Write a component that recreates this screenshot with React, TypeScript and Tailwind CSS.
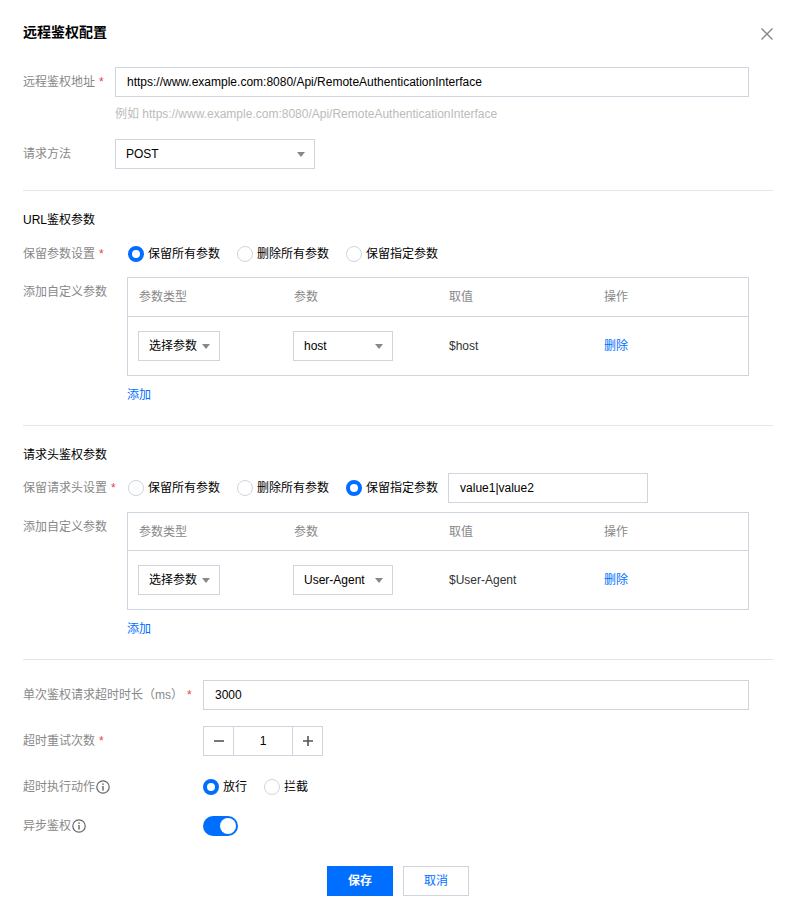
import React, { useState } from "react";

const FONT = "[font-family:'Liberation_Sans','Noto_Sans_CJK_SC',sans-serif]";

function Star() {
  return <span className="ml-[4px] text-[#e54545]">*</span>;
}

function Caret() {
  return (
    <svg width="8" height="5" viewBox="0 0 8 5" className="shrink-0">
      <path d="M0 0 L8 0 L4 5 Z" fill="#888" />
    </svg>
  );
}

function InfoIcon() {
  return (
    <svg width="14" height="14" viewBox="0 0 14 14" className="ml-[1px] shrink-0">
      <circle cx="7" cy="7" r="6.2" fill="none" stroke="#666" strokeWidth="1.2" />
      <rect x="6.3" y="6" width="1.4" height="4.6" fill="#666" />
      <rect x="6.3" y="3.4" width="1.4" height="1.5" fill="#666" />
    </svg>
  );
}

function Radio({ checked, label, onClick }: { checked: boolean; label: string; onClick: () => void }) {
  return (
    <button type="button" onClick={onClick} className="flex items-center gap-[4px] mr-[17px] text-[#000] leading-[18px]">
      {checked ? (
        <span className="w-[16px] h-[16px] rounded-full border-[4px] border-[#006eff] bg-white" />
      ) : (
        <span className="w-[16px] h-[16px] rounded-full border border-[#cfd5de] bg-white" />
      )}
      <span>{label}</span>
    </button>
  );
}

function Select({ value, w }: { value: string; w: string }) {
  return (
    <div className={`${w} h-[30px] border border-[#cfd5de] flex items-center justify-between pl-[10px] pr-[9px] text-[#000]`}>
      <span>{value}</span>
      <Caret />
    </div>
  );
}

function ParamTable({ param, value, headH }: { param: string; value: string; headH: string }) {
  return (
    <div className="w-[622px] border border-[#cfd5de]">
      <div className={`${headH} grid grid-cols-[155px_155px_155px_1fr] items-center border-b border-[#cfd5de] text-[#888]`}>
        <div className="pl-[11px]">参数类型</div>
        <div className="pl-[11px]">参数</div>
        <div className="pl-[11px]">取值</div>
        <div className="pl-[11px]">操作</div>
      </div>
      <div className="h-[58px] grid grid-cols-[155px_155px_155px_1fr] items-center">
        <div className="pl-[10px]">
          <Select value="选择参数" w="w-[82px]" />
        </div>
        <div className="pl-[10px]">
          <Select value={param} w="w-[100px]" />
        </div>
        <div className="pl-[11px] text-[#333]">{value}</div>
        <div className="pl-[11px] text-[#006eff]">删除</div>
      </div>
    </div>
  );
}

export default function App() {
  const [urlMode, setUrlMode] = useState(0);
  const [headMode, setHeadMode] = useState(2);
  const [timeoutAct, setTimeoutAct] = useState(0);
  const [retry, setRetry] = useState(1);
  const [async, setAsync] = useState(true);

  return (
    <div className={`w-[792px] h-[915px] bg-white px-[23px] pt-[22px] text-[12px] ${FONT}`}>
      <div className="w-[750px] flex items-center justify-between h-[20px]">
        <h2 className="text-[14px] font-bold text-[#000] leading-[20px]">远程鉴权配置</h2>
        <svg width="12" height="12" viewBox="0 0 12 12" className="mt-[3px]">
          <path d="M0.5 0.5 L11.5 11.5 M11.5 0.5 L0.5 11.5" stroke="#888" strokeWidth="1.4" />
        </svg>
      </div>

      <div className="mt-[25px] flex items-center">
        <div className="w-[92px] leading-[30px] text-[#888]">
          远程鉴权地址<Star />
        </div>
        <input
          className="w-[634px] h-[30px] border border-[#cfd5de] px-[11px] text-[#000] outline-none"
          defaultValue="https://www.example.com:8080/Api/RemoteAuthenticationInterface"
        />
      </div>
      <div className="ml-[92px] mt-[8px] leading-[18px] text-[#bbb]">
        例如 https://www.example.com:8080/Api/RemoteAuthenticationInterface
      </div>

      <div className="mt-[16px] flex items-center">
        <div className="w-[92px] leading-[30px] text-[#888]">请求方法</div>
        <Select value="POST" w="w-[200px]" />
      </div>

      <div className="mt-[21px] w-[750px] border-t border-[#e5e5e5]" />

      <div className="mt-[20px] leading-[18px] text-[#000]">URL鉴权参数</div>
      <div className="mt-[16px] flex items-center">
        <div className="w-[105px] leading-[18px] text-[#888]">
          保留参数设置<Star />
        </div>
        <Radio checked={urlMode === 0} label="保留所有参数" onClick={() => setUrlMode(0)} />
        <Radio checked={urlMode === 1} label="删除所有参数" onClick={() => setUrlMode(1)} />
        <Radio checked={urlMode === 2} label="保留指定参数" onClick={() => setUrlMode(2)} />
      </div>
      <div className="mt-[14px] flex items-start">
        <div className="w-[104px] pt-[6px] leading-[18px] text-[#888]">添加自定义参数</div>
        <ParamTable param="host" value="$host" headH="h-[39px]" />
      </div>
      <div className="mt-[10px] ml-[104px] leading-[18px] text-[#006eff]">添加</div>

      <div className="mt-[21px] w-[750px] border-t border-[#e5e5e5]" />

      <div className="mt-[20px] leading-[18px] text-[#000]">请求头鉴权参数</div>
      <div className="mt-[9px] flex items-center h-[30px]">
        <div className="w-[105px] leading-[30px] text-[#888]">
          保留请求头设置<Star />
        </div>
        <Radio checked={headMode === 0} label="保留所有参数" onClick={() => setHeadMode(0)} />
        <Radio checked={headMode === 1} label="删除所有参数" onClick={() => setHeadMode(1)} />
        <Radio checked={headMode === 2} label="保留指定参数" onClick={() => setHeadMode(2)} />
        <input
          className="-ml-[7px] w-[200px] h-[30px] border border-[#cfd5de] px-[11px] text-[#000] outline-none"
          defaultValue="value1|value2"
        />
      </div>
      <div className="mt-[9px] flex items-start">
        <div className="w-[104px] pt-[6px] leading-[18px] text-[#888]">添加自定义参数</div>
        <ParamTable param="User-Agent" value="$User-Agent" headH="h-[38px]" />
      </div>
      <div className="mt-[10px] ml-[104px] leading-[18px] text-[#006eff]">添加</div>

      <div className="mt-[21px] w-[750px] border-t border-[#e5e5e5]" />

      <div className="mt-[20px] flex items-center">
        <div className="w-[180px] leading-[30px] text-[#888]">
          单次鉴权请求超时时长（ms）<Star />
        </div>
        <input
          className="w-[546px] h-[30px] border border-[#cfd5de] px-[11px] text-[#000] outline-none"
          defaultValue="3000"
        />
      </div>

      <div className="mt-[16px] flex items-center">
        <div className="w-[180px] leading-[30px] text-[#888]">
          超时重试次数<Star />
        </div>
        <div className="flex h-[30px] w-[120px] border border-[#cfd5de] text-[#000]">
          <button type="button" onClick={() => setRetry(Math.max(0, retry - 1))} className="w-[30px] flex items-center justify-center border-r border-[#cfd5de]">
            <svg width="10" height="10" viewBox="0 0 10 10">
              <path d="M0 5 H10" stroke="#555" strokeWidth="1.6" />
            </svg>
          </button>
          <div className="flex-1 flex items-center justify-center">{retry}</div>
          <button type="button" onClick={() => setRetry(retry + 1)} className="w-[30px] flex items-center justify-center border-l border-[#cfd5de]">
            <svg width="10" height="10" viewBox="0 0 10 10">
              <path d="M0 5 H10 M5 0 V10" stroke="#555" strokeWidth="1.6" />
            </svg>
          </button>
        </div>
      </div>

      <div className="mt-[22px] flex items-center">
        <div className="w-[180px] flex items-center leading-[18px] text-[#888]">
          超时执行动作<InfoIcon />
        </div>
        <Radio checked={timeoutAct === 0} label="放行" onClick={() => setTimeoutAct(0)} />
        <Radio checked={timeoutAct === 1} label="拦截" onClick={() => setTimeoutAct(1)} />
      </div>

      <div className="mt-[20px] flex items-center">
        <div className="w-[180px] flex items-center leading-[20px] text-[#888]">
          异步鉴权<InfoIcon />
        </div>
        <button
          type="button"
          onClick={() => setAsync(!async)}
          className={`w-[35px] h-[20px] rounded-full p-[2px] flex items-center ${async ? "bg-[#006eff] justify-end" : "bg-[#cfd5de] justify-start"}`}
        >
          <span className="w-[16px] h-[16px] rounded-full bg-white" />
        </button>
      </div>

      <div className="mt-[30px] w-[750px] flex justify-center gap-[10px]">
        <button type="button" className="w-[66px] h-[30px] bg-[#006eff] text-white font-bold">保存</button>
        <button type="button" className="w-[66px] h-[30px] border border-[#cfd5de] bg-white text-[#006eff]">取消</button>
      </div>
    </div>
  );
}
